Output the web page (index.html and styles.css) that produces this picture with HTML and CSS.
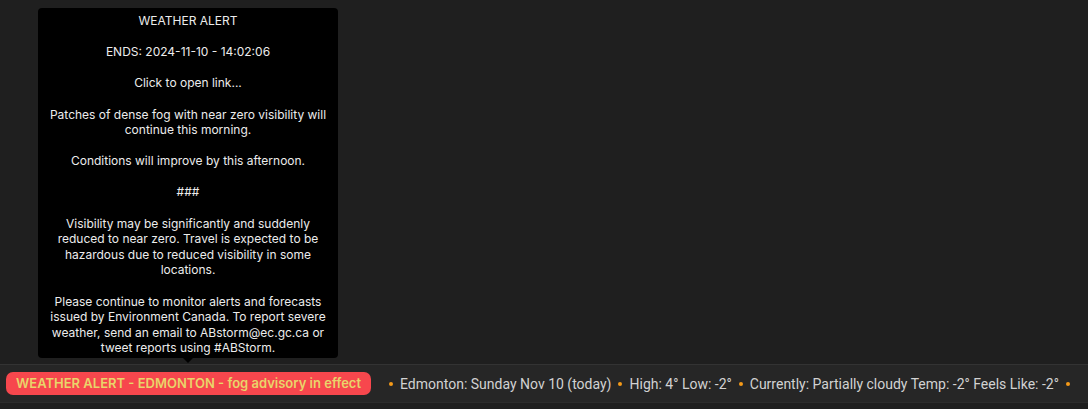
FILE: index.html
```html
<!DOCTYPE html>
<html>
<head>
<meta charset="utf-8">
<link rel="stylesheet" href="styles.css">
</head>
<body>
<div class="page">
  <div class="spacer"></div>
  <div class="bar">
    <div class="alert-wrap">
      <span class="badge">WEATHER ALERT - EDMONTON - fog advisory in effect</span>
      <div class="tooltip">
        <p>WEATHER ALERT</p>
        <p>ENDS: 2024-11-10 - 14:02:06</p>
        <p>Click to open link...</p>
        <p>Patches of dense fog with near zero visibility will continue this morning.</p>
        <p>Conditions will improve by this afternoon.</p>
        <p>###</p>
        <p>Visibility may be significantly and suddenly reduced to near zero. Travel is expected to be hazardous due to reduced visibility in some locations.</p>
        <p>Please continue to monitor alerts and forecasts issued by Environment Canada. To report severe weather, send an email to ABstorm@ec.gc.ca or tweet reports using #ABStorm.</p>
      </div>
    </div>
    <div class="ticker">
      <span class="dot"></span><span>Edmonton: Sunday Nov 10 (today)</span>
      <span class="dot"></span><span>High: 4° Low: -2°</span>
      <span class="dot"></span><span>Currently: Partially cloudy Temp: -2° Feels Like: -2°</span>
      <span class="dot"></span>
    </div>
  </div>
</div>
</body>
</html>
```

FILE: styles.css
```css
html, body {
  margin: 0;
  padding: 0;
  background: #1f1f1f;
  height: 100%;
}
.page {
  display: flex;
  flex-direction: column;
  height: 409px;
  font-family: Inter, "Noto Sans", sans-serif;
}
.spacer {
  height: 364px;
  flex: none;
}
.bar {
  height: 37px;
  background: #262626;
  border-top: 1px solid #333333;
  border-bottom: 1px solid #2c2c2c;
  display: flex;
  align-items: center;
  padding-left: 6px;
  gap: 17px;
}
.alert-wrap {
  position: relative;
}
.badge {
  display: block;
  background: #f7474d;
  color: #e9d46a;
  font-weight: 600;
  font-size: 13px;
  line-height: 23px;
  padding: 0 10px;
  border-radius: 7px;
  white-space: nowrap;
}
.tooltip {
  position: absolute;
  left: 32px;
  bottom: 37px;
  width: 284px;
  padding: 5px 8px 2px;
  background: #000;
  color: #ececec;
  border-radius: 4px;
  font-size: 12px;
  line-height: 15.6px;
  text-align: center;
}
.tooltip p {
  margin: 0 0 15.6px;
}
.tooltip p:last-child {
  margin-bottom: 0;
}
.tooltip::after {
  content: "";
  position: absolute;
  left: 50%;
  bottom: -5px;
  margin-left: -5px;
  border-left: 5px solid transparent;
  border-right: 5px solid transparent;
  border-top: 5px solid #000;
}
.ticker {
  display: flex;
  align-items: center;
  gap: 6px;
  color: #d2d2d2;
  font-family: Roboto, "Liberation Sans", sans-serif;
  font-size: 14px;
  white-space: nowrap;
}
.dot {
  width: 4px;
  height: 4px;
  border-radius: 50%;
  background: #f59a18;
  margin: 0 1px;
}
```
